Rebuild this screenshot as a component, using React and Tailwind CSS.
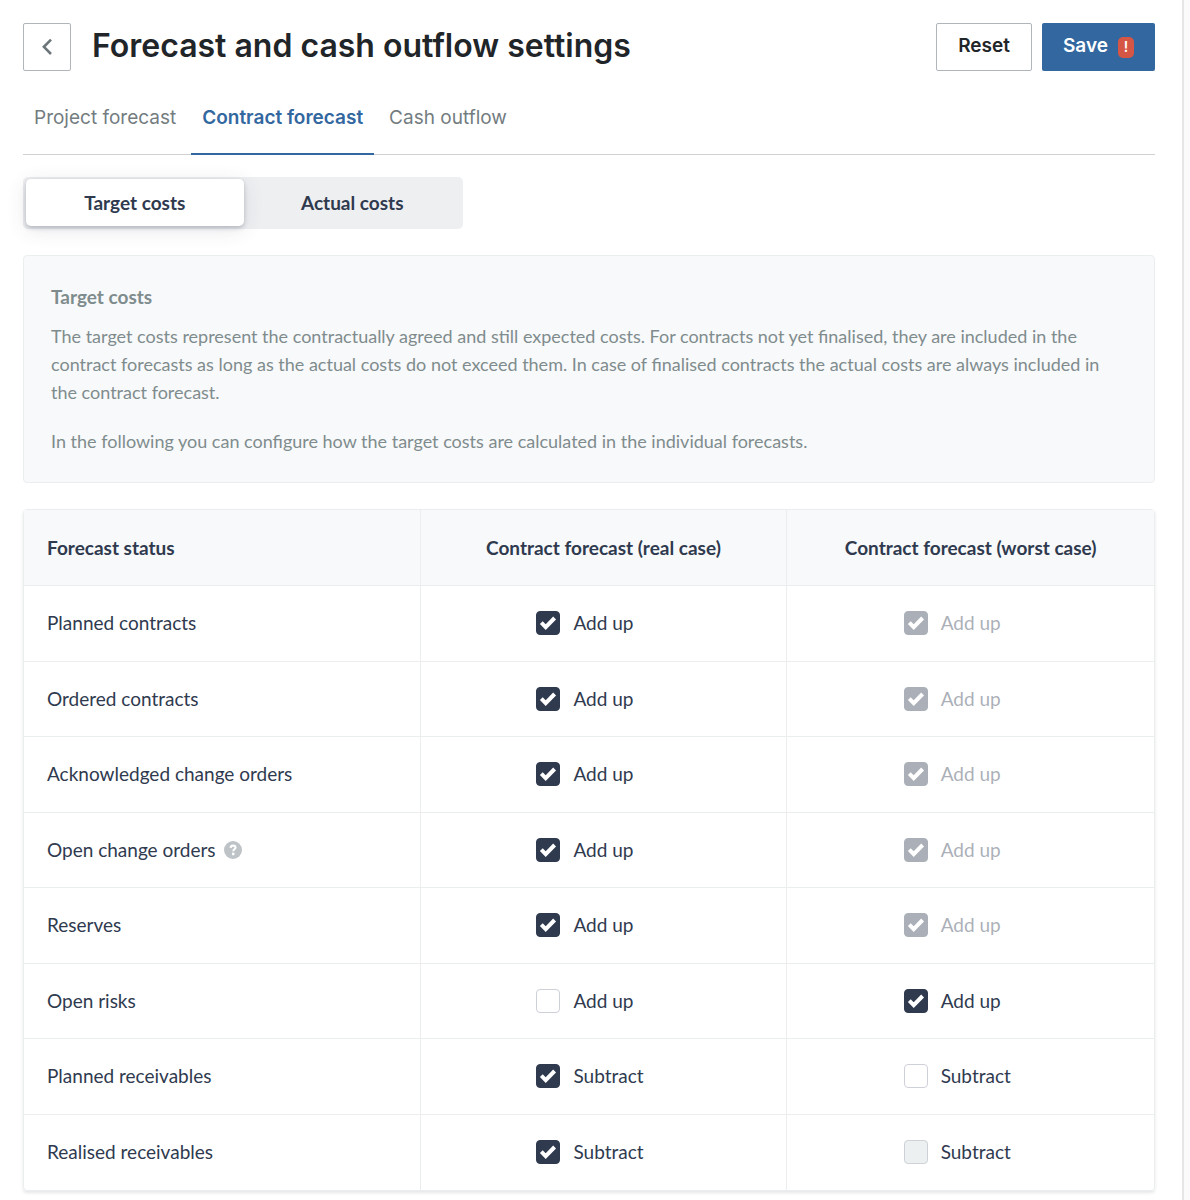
import { useState } from 'react';
import clsx from 'clsx';

const TABS = ['Project forecast', 'Contract forecast', 'Cash outflow'];
const COST_TYPES = ['Target costs', 'Actual costs'];

const ROWS = [
  { id: 'planned-contracts', label: 'Planned contracts', action: 'Add up', real: true, worst: true, locked: true },
  { id: 'ordered-contracts', label: 'Ordered contracts', action: 'Add up', real: true, worst: true, locked: true },
  { id: 'acknowledged-changes', label: 'Acknowledged change orders', action: 'Add up', real: true, worst: true, locked: true },
  { id: 'open-changes', label: 'Open change orders', action: 'Add up', real: true, worst: true, locked: true, help: true },
  { id: 'reserves', label: 'Reserves', action: 'Add up', real: true, worst: true, locked: true },
  { id: 'open-risks', label: 'Open risks', action: 'Add up', real: false, worst: true },
  { id: 'planned-receivables', label: 'Planned receivables', action: 'Subtract', real: true, worst: false },
  { id: 'realised-receivables', label: 'Realised receivables', action: 'Subtract', real: true, worst: false, locked: true },
];

function CheckOption({ id, label, checked, disabled, onChange }) {
  return (
    <label
      htmlFor={id}
      className={clsx('mx-auto flex w-[134px] items-center gap-[13px]', disabled && checked && 'opacity-40')}
    >
      <span className="grid size-6 shrink-0">
        <input
          id={id}
          type="checkbox"
          checked={checked}
          disabled={disabled}
          onChange={onChange}
          className="col-start-1 row-start-1 size-6 appearance-none rounded border border-[#ced2d8] bg-white checked:border-[#2f3a4f] checked:bg-[#2f3a4f] disabled:bg-[#ecf0f1] checked:disabled:bg-[#2f3a4f]"
        />
        {checked && (
          <svg viewBox="0 0 24 24" className="pointer-events-none col-start-1 row-start-1 size-6" aria-hidden="true">
            <path d="M5.3 11.7 9.7 16.1 18.6 7" fill="none" stroke="#fff" strokeWidth="4" />
          </svg>
        )}
      </span>
      {label}
    </label>
  );
}

function HelpButton() {
  return (
    <button type="button" aria-label="Help" className="flex size-[18px] items-center justify-center rounded-full bg-[#bdc3c7]">
      <svg viewBox="0 0 18 18" className="size-[18px]" aria-hidden="true">
        <path d="M6.6 6.9C6.7 5.4 7.7 4.6 9.1 4.6c1.4 0 2.4.8 2.4 2 0 1.7-2.2 1.7-2.2 3.6" fill="none" stroke="#fff" strokeWidth="2.1" />
        <circle cx="9.2" cy="13" r="1.4" fill="#fff" />
      </svg>
    </button>
  );
}

export default function App() {
  const [tab, setTab] = useState('Contract forecast');
  const [costType, setCostType] = useState('Target costs');
  const [rows, setRows] = useState(ROWS);

  const toggle = (id, key) => {
    setRows(rows.map((r) => (r.id === id ? { ...r, [key]: !r[key] } : r)));
  };

  return (
    <div className="flex min-h-screen bg-white font-[Lato,sans-serif] text-[19px] leading-7 text-[#2f3a4f]">
      <main className="min-w-0 flex-1 pt-[23px] pr-[27px] pb-2 pl-[23px]">
        <header className="flex items-start justify-between font-[Inter,sans-serif]">
          <div className="flex h-12 gap-[21px]">
            <button type="button" aria-label="Back" className="flex size-12 items-center justify-center rounded-xs border border-[#b0b5ba]">
              <svg viewBox="0 0 16 20" className="h-5 w-4" aria-hidden="true">
                <path d="M12 2.6 4.9 9.8l7.1 7.2" fill="none" stroke="#6c757a" strokeWidth="2.6" />
              </svg>
            </button>
            <h1 className="text-[32px] leading-[46px] font-semibold text-[#1f2528]">Forecast and cash outflow settings</h1>
          </div>
          <div className="flex gap-2.5 font-semibold">
            <button type="button" className="h-12 rounded-xs border border-[#b0b5ba] px-[21px] pb-0.5 text-[#1f2528]">Reset</button>
            <button type="button" className="flex h-12 items-center gap-2.5 rounded-xs bg-[#3267a0] px-[21px] text-white">
              <span className="pb-0.5">Save</span>
              <span className="flex h-[21px] w-4 items-center justify-center rounded-[5px] bg-[#d55645] text-sm">!</span>
            </button>
          </div>
        </header>

        <nav className="mt-[21px] flex gap-1 border-b border-[#ced2d2] font-[Inter,sans-serif]">
          {TABS.map((t) => (
            <a
              key={t}
              href="#"
              onClick={() => setTab(t)}
              className={clsx(
                '-mb-px border-b-2 px-[11px] pt-3 pb-[21px]',
                t === tab ? 'border-[#3267a0] font-semibold text-[#3267a0]' : 'border-transparent text-[#737c7f]'
              )}
            >
              {t}
            </a>
          ))}
        </nav>

        <div className="mt-[22px] flex h-[52px] w-[440px] rounded-[5px] bg-[#eeeff1] p-[2px] pl-[3px]">
          {COST_TYPES.map((c) => (
            <button
              key={c}
              type="button"
              onClick={() => setCostType(c)}
              className={clsx(
                'h-[47px] flex-1 rounded-[5px] font-bold',
                c === costType && 'bg-white shadow-[0_2px_4px_rgba(47,58,79,0.25),0_4px_20px_rgba(47,58,79,0.12)]'
              )}
            >
              {c}
            </button>
          ))}
        </div>

        <section className="mt-[26px] rounded border border-[#ebeeef] bg-[#f8f9fb] py-[27px] pr-11 pl-[27px] text-[#7f8c8d]">
          <h2 className="font-bold">Target costs</h2>
          <div className="mt-[11px] space-y-[21px] text-lg leading-7">
            <p>
              The target costs represent the contractually agreed and still expected costs. For contracts not yet finalised, they
              are included in the contract forecasts as long as the actual costs do not exceed them. In case of finalised
              contracts the actual costs are always included in the contract forecast.
            </p>
            <p>In the following you can configure how the target costs are calculated in the individual forecasts.</p>
          </div>
        </section>

        <div className="mt-[26px] rounded border border-[#ebeeef] shadow-[0_2px_3px_rgba(47,58,79,0.12)]">
          <table className="h-[680px] w-full table-fixed border-separate border-spacing-0">
            <thead>
              <tr className="bg-[#f8f9fb]">
                <th className="h-[76px] w-[35.1%] border-r border-b border-[#ebeeef] px-[23px] text-left">Forecast status</th>
                <th className="border-r border-b border-[#ebeeef]">Contract forecast (real case)</th>
                <th className="border-b border-[#ebeeef]">Contract forecast (worst case)</th>
              </tr>
            </thead>
            <tbody>
              {rows.map((row, i) => {
                const line = i < rows.length - 1 && 'border-b';
                return (
                  <tr key={row.id}>
                    <td className={clsx('h-[75px] border-r border-[#ebeeef] px-[23px]', line)}>
                      <div className="flex items-center gap-2">
                        {row.label}
                        {row.help && <HelpButton />}
                      </div>
                    </td>
                    <td className={clsx('border-r border-[#ebeeef]', line)}>
                      <CheckOption id={`${row.id}-real`} label={row.action} checked={row.real} onChange={() => toggle(row.id, 'real')} />
                    </td>
                    <td className={clsx('border-[#ebeeef]', line)}>
                      <CheckOption
                        id={`${row.id}-worst`}
                        label={row.action}
                        checked={row.worst}
                        disabled={row.locked}
                        onChange={() => toggle(row.id, 'worst')}
                      />
                    </td>
                  </tr>
                );
              })}
            </tbody>
          </table>
        </div>
      </main>
      <div className="w-2 border-l-2 border-[#e6e6e6] bg-[#fafafa]" />
    </div>
  );
}
